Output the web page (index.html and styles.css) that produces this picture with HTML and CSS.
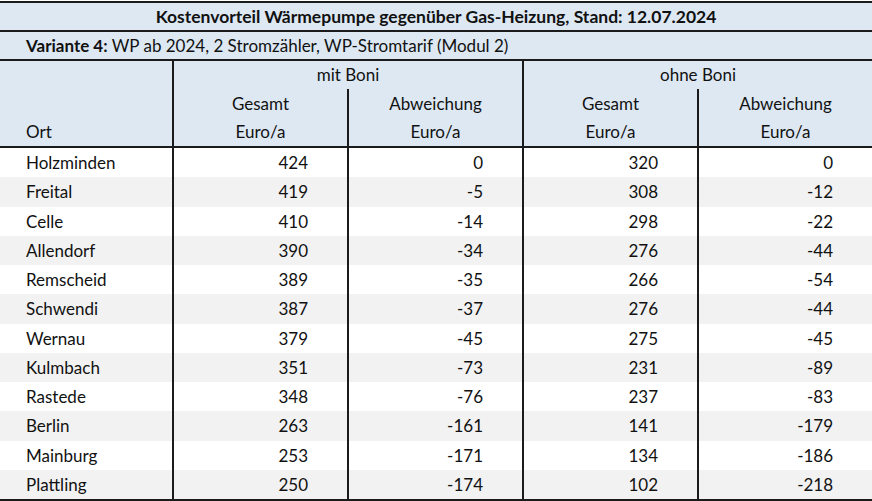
FILE: index.html
```html
<!DOCTYPE html>
<html lang="de">
<head>
<meta charset="utf-8">
<title>Kostenvorteil Wärmepumpe</title>
<link rel="stylesheet" href="styles.css">
</head>
<body>
<table class="tbl">
  <colgroup>
    <col class="c-ort">
    <col class="c-num">
    <col class="c-num">
    <col class="c-num">
    <col class="c-last">
  </colgroup>
  <thead>
    <tr class="r-title"><th colspan="5">Kostenvorteil Wärmepumpe gegenüber Gas-Heizung, Stand: 12.07.2024</th></tr>
    <tr class="r-variant"><td colspan="5"><b>Variante 4:</b> WP ab 2024, 2 Stromzähler, WP-Stromtarif (Modul 2)</td></tr>
    <tr class="r-h1">
      <th class="ort" rowspan="3">Ort</th>
      <th class="grp" colspan="2">mit Boni</th>
      <th class="grp" colspan="2">ohne Boni</th>
    </tr>
    <tr class="r-h2">
      <th class="grp">Gesamt</th><th class="sub">Abweichung</th>
      <th class="grp">Gesamt</th><th class="sub">Abweichung</th>
    </tr>
    <tr class="r-h3">
      <th class="grp">Euro/a</th><th class="sub">Euro/a</th>
      <th class="grp">Euro/a</th><th class="sub">Euro/a</th>
    </tr>
  </thead>
  <tbody>
    <tr><td class="name">Holzminden</td><td class="num grp">424</td><td class="num sub">0</td><td class="num grp">320</td><td class="num sub">0</td></tr>
    <tr><td class="name">Freital</td><td class="num grp">419</td><td class="num sub">-5</td><td class="num grp">308</td><td class="num sub">-12</td></tr>
    <tr><td class="name">Celle</td><td class="num grp">410</td><td class="num sub">-14</td><td class="num grp">298</td><td class="num sub">-22</td></tr>
    <tr><td class="name">Allendorf</td><td class="num grp">390</td><td class="num sub">-34</td><td class="num grp">276</td><td class="num sub">-44</td></tr>
    <tr><td class="name">Remscheid</td><td class="num grp">389</td><td class="num sub">-35</td><td class="num grp">266</td><td class="num sub">-54</td></tr>
    <tr><td class="name">Schwendi</td><td class="num grp">387</td><td class="num sub">-37</td><td class="num grp">276</td><td class="num sub">-44</td></tr>
    <tr><td class="name">Wernau</td><td class="num grp">379</td><td class="num sub">-45</td><td class="num grp">275</td><td class="num sub">-45</td></tr>
    <tr><td class="name">Kulmbach</td><td class="num grp">351</td><td class="num sub">-73</td><td class="num grp">231</td><td class="num sub">-89</td></tr>
    <tr><td class="name">Rastede</td><td class="num grp">348</td><td class="num sub">-76</td><td class="num grp">237</td><td class="num sub">-83</td></tr>
    <tr><td class="name">Berlin</td><td class="num grp">263</td><td class="num sub">-161</td><td class="num grp">141</td><td class="num sub">-179</td></tr>
    <tr><td class="name">Mainburg</td><td class="num grp">253</td><td class="num sub">-171</td><td class="num grp">134</td><td class="num sub">-186</td></tr>
    <tr><td class="name">Plattling</td><td class="num grp">250</td><td class="num sub">-174</td><td class="num grp">102</td><td class="num sub">-218</td></tr>
  </tbody>
</table>
</body>
</html>
```

FILE: styles.css
```css
html, body {
  margin: 0;
  padding: 0;
  background: #ffffff;
  overflow: hidden;
}

body {
  padding-top: 1px;
  font-family: Lato, "Open Sans", sans-serif;
  font-size: 17px;
  color: #111111;
}

.tbl {
  border-collapse: collapse;
  table-layout: fixed;
  width: 872px;
}

.c-ort { width: 173px; }
.c-num { width: 175px; }
.c-last { width: 174px; }

.tbl th,
.tbl td {
  padding: 0;
  font-weight: normal;
  white-space: nowrap;
  line-height: 20px;
}

.r-title th {
  height: 27px;
  background: #dde8f3;
  font-weight: bold;
  font-size: 17.5px;
  text-align: center;
  border-top: 2px solid #1b1b1b;
  border-bottom: 2px solid #1b1b1b;
}

.r-variant td {
  height: 27px;
  background: #dde8f3;
  text-align: left;
  padding-left: 26px;
  border-bottom: 2px solid #1b1b1b;
}

.r-variant b {
  font-weight: bold;
}

.r-h1 th,
.r-h2 th,
.r-h3 th {
  background: #dde8f3;
  text-align: center;
  vertical-align: middle;
}

.r-h1 th { height: 28px; }
.r-h2 th { height: 28px; padding-top: 1px; }
.r-h3 th { height: 28px; border-bottom: 2px solid #1b1b1b; }

.tbl th.ort {
  text-align: left;
  vertical-align: bottom;
  padding-left: 26px;
  padding-bottom: 4px;
  border-bottom: 2px solid #1b1b1b;
}

.tbl .grp { border-left: 2px solid #1b1b1b; }
.tbl .sub { border-left: 2px solid #1b1b1b; }

.tbl tbody td {
  height: 28.25px;
  padding-top: 1px;
}

.tbl tbody tr:nth-child(even) td {
  background: #f2f2f2;
}

.tbl tbody tr:last-child td {
  border-bottom: 2px solid #1b1b1b;
}

.tbl td.name {
  padding-left: 26px;
  text-align: left;
}

.tbl td.num {
  text-align: right;
  padding-right: 39px;
}
```
